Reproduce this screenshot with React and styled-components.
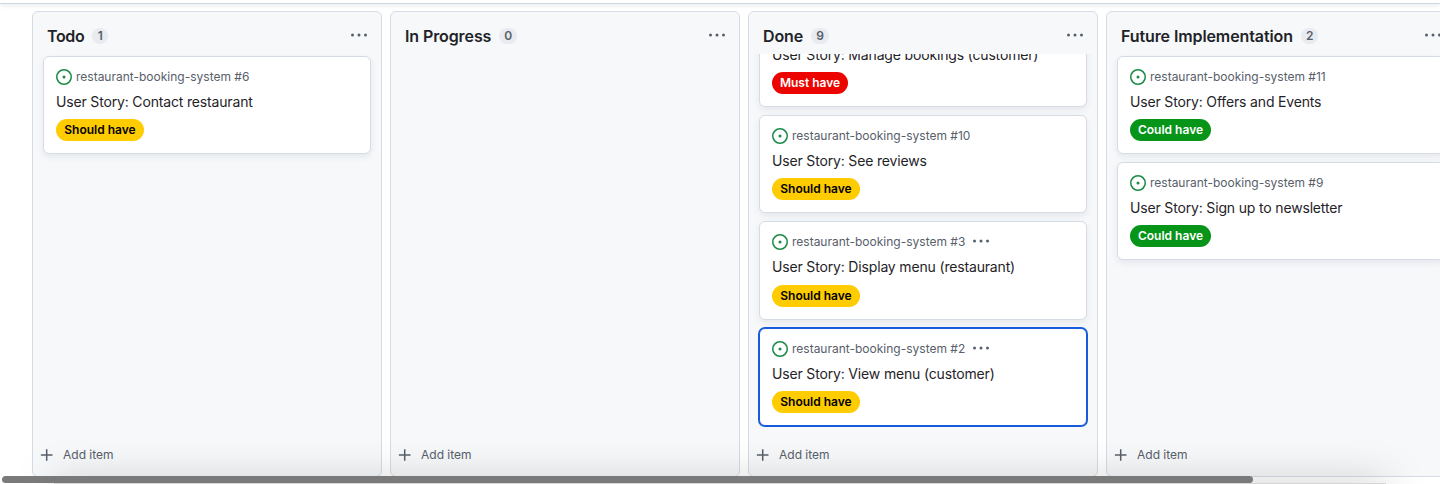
import React from "react";
import styled, { createGlobalStyle } from "styled-components";

const GlobalStyle = createGlobalStyle`
  * { box-sizing: border-box; }
  html, body { margin: 0; padding: 0; }
  body { background: #fff; overflow: hidden; font-family: Inter, "Liberation Sans", sans-serif; color: #1f2328; }
`;

const Page = styled.div`
  position: relative;
  width: 1440px;
  height: 484px;
  overflow: hidden;
  display: flex;
  flex-direction: column;
  background: #fff;
`;

const TopEdge = styled.div`
  flex: none;
  height: 4px;
  border-bottom: 1px solid #d0d7de;
  box-shadow: 0 2px 4px rgba(140, 149, 159, 0.18);
`;

const Board = styled.div`
  flex: none;
  display: flex;
  gap: 8px;
  height: 466px;
  margin-top: 7px;
  padding-left: 32px;
`;

const Column = styled.section`
  flex: none;
  display: flex;
  flex-direction: column;
  width: 350px;
  border: 1px solid #d5dce5;
  border-radius: 6px;
  background: #f6f8fa;
`;

const Header = styled.header`
  flex: none;
  display: flex;
  align-items: center;
  height: 42px;
  padding: 5px 13px 0 14px;
`;

const Title = styled.h2`
  margin: 0;
  font-size: 16px;
  line-height: 24px;
  font-weight: 600;
  white-space: nowrap;
  letter-spacing: ${(p) => p.$tracking || -0.1}px;
`;

const Count = styled.span`
  min-width: 16px;
  height: 16px;
  margin-left: 8px;
  padding: 0 ${(p) => (p.$narrow ? 4 : 5)}px;
  border-radius: 8px;
  background: #e8ebef;
  color: #57606a;
  font-size: 12px;
  line-height: 16px;
  font-weight: 600;
  text-align: center;
`;

const HeaderMenu = styled.button`
  margin: 0 0 2px auto;
  padding: 0;
  border: 0;
  background: none;
  color: #57606a;
  display: flex;
`;

const CardList = styled.div`
  flex: 1;
  min-height: 0;
  overflow: hidden;
  display: flex;
  flex-direction: column;
  justify-content: ${(p) => (p.$scrolled ? "flex-end" : "flex-start")};
  gap: 8px;
  padding: ${(p) => (p.$scrolled ? "0 10px 8px" : "2px 10px 8px")};
`;

const Card = styled.article`
  flex: none;
  height: ${(p) => (p.$roomy ? 99 : 98)}px;
  padding: 11px 12px;
  border: 1px solid ${(p) => (p.$selected ? "#155bdc" : "#d5dce5")};
  border-radius: 6px;
  background: #fff;
  box-shadow: ${(p) =>
    p.$selected ? "0 0 0 1px #155bdc" : "0 3px 6px rgba(140, 149, 159, 0.15)"};
`;

const Meta = styled.div`
  display: flex;
  align-items: center;
  height: 18px;
  color: #57606a;
`;

const Repo = styled.span`
  margin: 0 7px 0 4px;
  font-size: 12px;
  line-height: 18px;
  white-space: nowrap;
`;

const CardMenu = styled.span`
  display: flex;
  margin-bottom: 2px;
`;

const CardTitle = styled.div`
  margin-top: 6px;
  font-size: 14px;
  line-height: 20px;
  white-space: nowrap;
  letter-spacing: -0.165px;
`;

const labelColors = {
  "Should have": ["#ffcc00", "#000", 88],
  "Must have": ["#eb0400", "#fff", 76],
  "Could have": ["#069518", "#fff", 81],
};

const Label = styled.div`
  display: flex;
  align-items: center;
  justify-content: center;
  width: ${(p) => labelColors[p.$kind][2]}px;
  height: 22px;
  margin-top: ${(p) => (p.$roomy ? 8 : 7)}px;
  border-radius: 11px;
  background: ${(p) => labelColors[p.$kind][0]};
  color: ${(p) => labelColors[p.$kind][1]};
  font-size: 12px;
  line-height: 22px;
  font-weight: 600;
  white-space: nowrap;
`;

const AddItem = styled.button`
  flex: none;
  display: flex;
  align-items: center;
  gap: 8px;
  height: 42px;
  padding: 0 6px;
  border: 0;
  background: none;
  color: #57606a;
  font: 400 12px/18px Inter, "Liberation Sans", sans-serif;
`;

const BottomFade = styled.div`
  position: absolute;
  left: 54px;
  right: 54px;
  top: 483px;
  height: 30px;
  background: #d6d6d6;
  box-shadow: 0 0 44px 2px rgba(0, 0, 0, 0.18);
`;

const ScrollThumb = styled.div`
  position: absolute;
  left: 2px;
  top: 476px;
  width: 1251px;
  height: 7px;
  border-radius: 4px;
  background: #7a7a7a;
`;

const OpenIssue = () => (
  <svg width="16" height="16" viewBox="0 0 16 16" fill="#1a8a45">
    <path d="M8 9.5a1.5 1.5 0 1 0 0-3 1.5 1.5 0 0 0 0 3Z" />
    <path d="M8 0a8 8 0 1 1 0 16A8 8 0 0 1 8 0ZM1.5 8a6.5 6.5 0 1 0 13 0 6.5 6.5 0 0 0-13 0Z" />
  </svg>
);

const Dots = () => (
  <svg width="18" height="16" viewBox="0 0 18 16" fill="currentColor">
    <circle cx="2.5" cy="8" r="1.5" />
    <circle cx="9" cy="8" r="1.5" />
    <circle cx="15.5" cy="8" r="1.5" />
  </svg>
);

const Plus = () => (
  <svg width="16" height="16" viewBox="0 0 16 16" fill="none" stroke="currentColor" strokeWidth="1.5">
    <path d="M7.7 2.2v11.6M1.9 8h11.6" />
  </svg>
);

const columns = [
  {
    title: "Todo",
    tracking: -0.35,
    count: 1,
    cards: [{ id: 6, title: "Contact restaurant", label: "Should have" }],
  },
  { title: "In Progress", count: 0, cards: [] },
  {
    title: "Done",
    count: 9,
    scrolled: true,
    cards: [
      { id: 12, title: "Manage bookings (customer)", label: "Must have", clipped: true },
      { id: 10, title: "See reviews", label: "Should have" },
      { id: 3, title: "Display menu (restaurant)", label: "Should have", menu: true, roomy: true },
      { id: 2, title: "View menu (customer)", label: "Should have", menu: true, selected: true },
    ],
  },
  {
    title: "Future Implementation",
    count: 2,
    cards: [
      { id: 11, title: "Offers and Events", label: "Could have" },
      { id: 9, title: "Sign up to newsletter", label: "Could have" },
    ],
  },
];

export default function App() {
  return (
    <Page>
      <GlobalStyle />
      <TopEdge />
      <Board>
        {columns.map((col) => (
          <Column key={col.title}>
            <Header>
              <Title $tracking={col.tracking}>{col.title}</Title>
              <Count $narrow={col.count === 1}>{col.count}</Count>
              <HeaderMenu aria-label="Column menu"><Dots /></HeaderMenu>
            </Header>
            <CardList $scrolled={col.scrolled}>
              {col.cards.map((c) => (
                <Card key={c.id} $selected={c.selected} $roomy={c.roomy}>
                  <Meta>
                    {!c.clipped && (
                      <>
                        <OpenIssue />
                        <Repo>restaurant-booking-system #{c.id}</Repo>
                      </>
                    )}
                    {c.menu && <CardMenu><Dots /></CardMenu>}
                  </Meta>
                  <CardTitle>User Story: {c.title}</CardTitle>
                  <Label $kind={c.label} $roomy={c.roomy}>{c.label}</Label>
                </Card>
              ))}
            </CardList>
            <AddItem><Plus />Add item</AddItem>
          </Column>
        ))}
      </Board>
      <BottomFade />
      <ScrollThumb />
    </Page>
  );
}
